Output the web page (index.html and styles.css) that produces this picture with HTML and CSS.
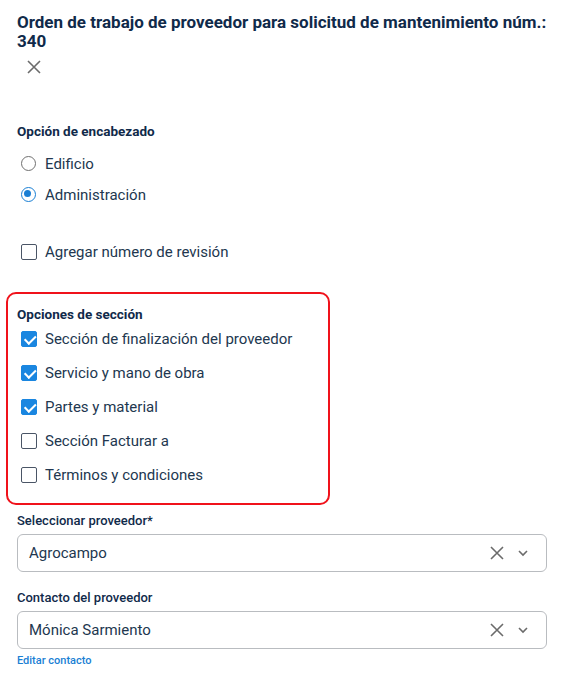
FILE: index.html
```html
<!DOCTYPE html>
<html lang="es">
<head>
<meta charset="utf-8">
<link rel="stylesheet" href="styles.css">
</head>
<body>
<div class="panel">
  <h1 class="title">Orden de trabajo de proveedor para solicitud de mantenimiento núm.: 340</h1>
  <button class="close" aria-label="Cerrar">
    <svg width="14" height="14" viewBox="0 0 14 14"><path d="M1 1L13 13M13 1L1 13" stroke="#6b6b6b" stroke-width="1.6" fill="none"/></svg>
  </button>

  <div class="group header-group">
    <div class="label">Opción de encabezado</div>
    <label class="opt radio-row"><span class="radio"></span>Edificio</label>
    <label class="opt radio-row"><span class="radio on"></span>Administración</label>
  </div>

  <label class="opt revision"><span class="cb"></span>Agregar número de revisión</label>

  <div class="section-box">
    <div class="label">Opciones de sección</div>
    <label class="opt cb-row"><span class="cb on"></span>Sección de finalización del proveedor</label>
    <label class="opt cb-row"><span class="cb on"></span>Servicio y mano de obra</label>
    <label class="opt cb-row"><span class="cb on"></span>Partes y material</label>
    <label class="opt cb-row"><span class="cb"></span>Sección Facturar a</label>
    <label class="opt cb-row"><span class="cb"></span>Términos y condiciones</label>
  </div>

  <div class="field">
    <div class="flabel">Seleccionar proveedor*</div>
    <div class="select">
      <span class="value">Agrocampo</span>
      <svg class="clear" width="14" height="14" viewBox="0 0 14 14"><path d="M1 1L13 13M13 1L1 13" stroke="#6b6b6b" stroke-width="1.6" fill="none"/></svg>
      <svg class="chev" width="12" height="8" viewBox="0 0 12 8"><path d="M2 2L6 6L10 2" stroke="#6b6b6b" stroke-width="1.6" fill="none"/></svg>
    </div>
  </div>

  <div class="field contact">
    <div class="flabel">Contacto del proveedor</div>
    <div class="select">
      <span class="value">Mónica Sarmiento</span>
      <svg class="clear" width="14" height="14" viewBox="0 0 14 14"><path d="M1 1L13 13M13 1L1 13" stroke="#6b6b6b" stroke-width="1.6" fill="none"/></svg>
      <svg class="chev" width="12" height="8" viewBox="0 0 12 8"><path d="M2 2L6 6L10 2" stroke="#6b6b6b" stroke-width="1.6" fill="none"/></svg>
    </div>
    <a class="edit" href="#">Editar contacto</a>
  </div>
</div>
</body>
</html>
```

FILE: styles.css
```css
* { box-sizing: border-box; }
body {
  margin: 0;
  background: #fff;
  font-family: Roboto, "Liberation Sans", Arial, sans-serif;
  color: #22374f;
}
.panel {
  display: flex;
  flex-direction: column;
  padding: 13px 22px 0 17px;
}
.title {
  margin: 0;
  font-size: 17px;
  line-height: 19px;
  font-weight: 700;
  color: #102a4a;
}
.close {
  align-self: flex-start;
  margin: 9px 0 0 10px;
  padding: 0;
  border: 0;
  background: none;
  width: 14px;
  height: 14px;
  display: flex;
}
.label {
  font-size: 13.5px;
  line-height: 16px;
  font-weight: 700;
  color: #102a4a;
}
.flabel {
  font-size: 13px;
  line-height: 16px;
  font-weight: 500;
  color: #102a4a;
}
.header-group {
  margin-top: 49px;
  display: flex;
  flex-direction: column;
}
.opt {
  display: flex;
  align-items: center;
  font-size: 15px;
  line-height: 20px;
  color: #22374f;
}
.header-group .label { margin-bottom: 9px; }
.radio-row { height: 31px; margin-left: 4px; }
.radio {
  width: 15px;
  height: 15px;
  border: 1.6px solid #707070;
  border-radius: 50%;
  margin-right: 9px;
  flex: none;
  position: relative;
}
.radio.on { border-color: #1a7fd4; }
.radio.on::after {
  content: "";
  position: absolute;
  left: 2.4px;
  top: 2.4px;
  width: 7px;
  height: 7px;
  border-radius: 50%;
  background: #1a7fd4;
}
.cb {
  width: 16px;
  height: 16px;
  border: 1.5px solid #4a5566;
  border-radius: 2px;
  margin-right: 8px;
  flex: none;
  position: relative;
}
.cb.on {
  background: #1a86e0;
  border-color: #1a86e0;
}
.cb.on::after {
  content: "";
  position: absolute;
  left: 4.5px;
  top: 1px;
  width: 4.5px;
  height: 8.5px;
  border: solid #fff;
  border-width: 0 2px 2px 0;
  transform: rotate(45deg);
}
.revision {
  margin: 32px 0 0 4px;
  height: 20px;
}
.section-box {
  margin: 30px 0 0 -11px;
  width: 324px;
  border: 2px solid #f0121b;
  border-radius: 10px;
  padding: 12px 9px 11px 9px;
  display: flex;
  flex-direction: column;
}
.section-box .label { margin-bottom: 0; }
.cb-row { height: 34px; margin-left: 4px; }
.field {
  margin-top: 8px;
  display: flex;
  flex-direction: column;
}
.select {
  margin-top: 5px;
  height: 38px;
  border: 1px solid #b9bcc0;
  border-radius: 6px;
  display: flex;
  align-items: center;
  padding: 0 17px 0 11px;
}
.value {
  flex: 1;
  font-size: 15px;
  color: #22374f;
}
.clear { margin-right: 13px; }
.contact { margin-top: 18px; }
.edit {
  margin-top: 5px;
  font-size: 11px;
  line-height: 14px;
  color: #1a7fd4;
  text-decoration: none;
  font-weight: 500;
}
```
